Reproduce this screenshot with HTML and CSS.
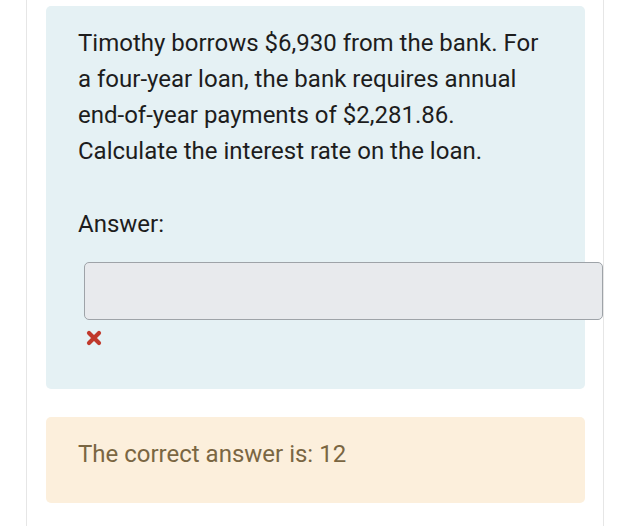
FILE: index.html
```html
<!DOCTYPE html>
<html lang="en">
<head>
  <meta charset="UTF-8">
  <meta name="viewport" content="width=device-width, initial-scale=1.0">
  <title>Question</title>
  <link rel="stylesheet" href="styles.css">
</head>
<body>
  <div class="page">
    <!-- Question block -->
    <div class="question">
      <p class="qtext">
        Timothy borrows $6,930 from the bank. For<br>
        a four-year loan, the bank requires annual<br>
        end-of-year payments of $2,281.86.<br>
        Calculate the interest rate on the loan.
      </p>
      <p class="answer-label">Answer:</p>
      <div class="answer-input"></div>
      <svg class="wrong" width="16" height="16" viewBox="0 0 16 16">
        <path d="M3 3 L13 13 M13 3 L3 13" stroke="#c0392b" stroke-width="4.2" stroke-linecap="round"/>
      </svg>
    </div>

    <!-- Feedback block -->
    <div class="feedback">
      <p>The correct answer is: 12</p>
    </div>
  </div>
</body>
</html>
```

FILE: styles.css
```css
/* General Reset */
* {
  margin: 0;
  padding: 0;
  box-sizing: border-box;
}

body {
  font-family: Roboto, "Liberation Sans", Arial, sans-serif;
  background: #ffffff;
  color: #1d1d1d;
}

.page {
  margin-left: 26px;
  width: 578px;
  min-height: 526px;
  border-left: 1px solid #e6e6e6;
  border-right: 1px solid #e6e6e6;
  padding: 6px 18px 0 19px;
}

.question {
  background: #e5f1f4;
  border-radius: 5px;
  padding: 19px 0 0 32px;
  height: 383px;
}

.qtext,
.answer-label {
  font-size: 24px;
  line-height: 36px;
}

.answer-label {
  margin-top: 37px;
}

.answer-input {
  margin-top: 20px;
  margin-left: 6px;
  width: 519px;
  height: 58px;
  background: #e8eaed;
  border: 1px solid #9ea3a8;
  border-radius: 5px;
}

.wrong {
  display: block;
  margin: 10px 0 0 8px;
}

.feedback {
  margin-top: 28px;
  background: #fcefdc;
  border-radius: 5px;
  height: 86px;
  padding: 19px 0 0 32px;
}

.feedback p {
  font-size: 24px;
  line-height: 36px;
  color: #7a6642;
}
```
